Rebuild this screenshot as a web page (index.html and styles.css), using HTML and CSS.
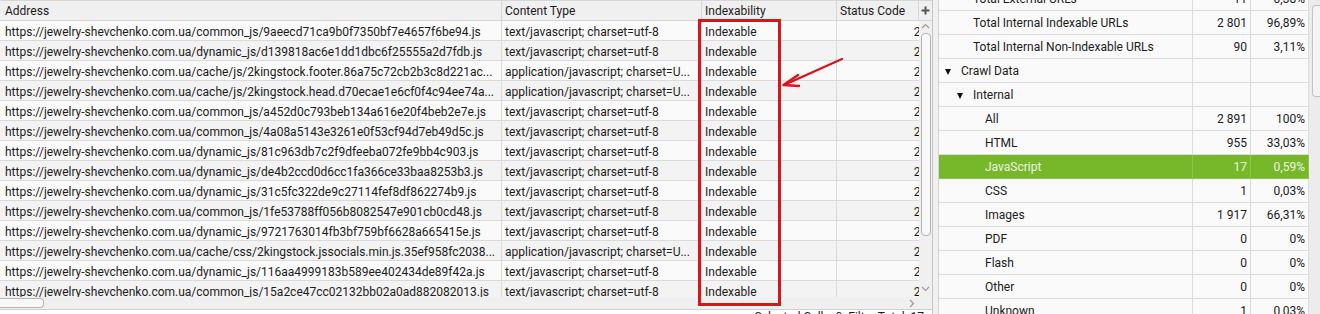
FILE: index.html
```html
<!DOCTYPE html>
<html lang="en">
<head>
  <meta charset="UTF-8">
  <title>Crawl - JavaScript</title>
  <link rel="stylesheet" href="styles.css">
</head>
<body>
  <div class="app">
    <!-- left: results table -->
    <div class="left">
      <div class="head">
        <div class="hc c-addr">Address</div>
        <div class="hc c-type">Content Type</div>
        <div class="hc c-idx">Indexability</div>
        <div class="hc c-status">Status Code</div>
        <div class="hc c-plus">
          <svg width="9" height="9" viewBox="0 0 9 9"><rect x="3.5" y="0.5" width="2" height="8" fill="#555"/><rect x="0.5" y="3.5" width="8" height="2" fill="#555"/></svg>
        </div>
      </div>
      <div class="body">
        <div class="rows">
          <div class="row"><div class="c c-addr">https://jewelry-shevchenko.com.ua/common_js/9aeecd71ca9b0f7350bf7e4657f6be94.js</div><div class="c c-type">text/javascript; charset=utf-8</div><div class="c c-idx">Indexable</div><div class="c c-code">200</div></div>
          <div class="row"><div class="c c-addr">https://jewelry-shevchenko.com.ua/dynamic_js/d139818ac6e1dd1dbc6f25555a2d7fdb.js</div><div class="c c-type">text/javascript; charset=utf-8</div><div class="c c-idx">Indexable</div><div class="c c-code">200</div></div>
          <div class="row"><div class="c c-addr">https://jewelry-shevchenko.com.ua/cache/js/2kingstock.footer.86a75c72cb2b3c8d221ac...</div><div class="c c-type">application/javascript; charset=U...</div><div class="c c-idx">Indexable</div><div class="c c-code">200</div></div>
          <div class="row"><div class="c c-addr">https://jewelry-shevchenko.com.ua/cache/js/2kingstock.head.d70ecae1e6cf0f4c94ee74a...</div><div class="c c-type">application/javascript; charset=U...</div><div class="c c-idx">Indexable</div><div class="c c-code">200</div></div>
          <div class="row"><div class="c c-addr">https://jewelry-shevchenko.com.ua/common_js/a452d0c793beb134a616e20f4beb2e7e.js</div><div class="c c-type">text/javascript; charset=utf-8</div><div class="c c-idx">Indexable</div><div class="c c-code">200</div></div>
          <div class="row"><div class="c c-addr">https://jewelry-shevchenko.com.ua/common_js/4a08a5143e3261e0f53cf94d7eb49d5c.js</div><div class="c c-type">text/javascript; charset=utf-8</div><div class="c c-idx">Indexable</div><div class="c c-code">200</div></div>
          <div class="row"><div class="c c-addr">https://jewelry-shevchenko.com.ua/dynamic_js/81c963db7c2f9dfeeba072fe9bb4c903.js</div><div class="c c-type">text/javascript; charset=utf-8</div><div class="c c-idx">Indexable</div><div class="c c-code">200</div></div>
          <div class="row"><div class="c c-addr">https://jewelry-shevchenko.com.ua/dynamic_js/de4b2ccd0d6cc1fa366ce33baa8253b3.js</div><div class="c c-type">text/javascript; charset=utf-8</div><div class="c c-idx">Indexable</div><div class="c c-code">200</div></div>
          <div class="row"><div class="c c-addr">https://jewelry-shevchenko.com.ua/dynamic_js/31c5fc322de9c27114fef8df862274b9.js</div><div class="c c-type">text/javascript; charset=utf-8</div><div class="c c-idx">Indexable</div><div class="c c-code">200</div></div>
          <div class="row"><div class="c c-addr">https://jewelry-shevchenko.com.ua/common_js/1fe53788ff056b8082547e901cb0cd48.js</div><div class="c c-type">text/javascript; charset=utf-8</div><div class="c c-idx">Indexable</div><div class="c c-code">200</div></div>
          <div class="row"><div class="c c-addr">https://jewelry-shevchenko.com.ua/dynamic_js/9721763014fb3bf759bf6628a665415e.js</div><div class="c c-type">text/javascript; charset=utf-8</div><div class="c c-idx">Indexable</div><div class="c c-code">200</div></div>
          <div class="row"><div class="c c-addr">https://jewelry-shevchenko.com.ua/cache/css/2kingstock.jssocials.min.js.35ef958fc2038...</div><div class="c c-type">application/javascript; charset=U...</div><div class="c c-idx">Indexable</div><div class="c c-code">200</div></div>
          <div class="row"><div class="c c-addr">https://jewelry-shevchenko.com.ua/dynamic_js/116aa4999183b589ee402434de89f42a.js</div><div class="c c-type">text/javascript; charset=utf-8</div><div class="c c-idx">Indexable</div><div class="c c-code">200</div></div>
          <div class="row"><div class="c c-addr">https://jewelry-shevchenko.com.ua/common_js/15a2ce47cc02132bb02a0ad882082013.js</div><div class="c c-type">text/javascript; charset=utf-8</div><div class="c c-idx">Indexable</div><div class="c c-code">200</div></div>
        </div>
        <div class="vscroll">
          <svg class="chev" width="9" height="6" viewBox="0 0 9 6"><polyline points="1,5 4.5,1.5 8,5" fill="none" stroke="#9a9a9a" stroke-width="1.2"/></svg>
          <div class="vthumb"></div>
          <div class="vspace"></div>
          <svg class="chev" width="9" height="6" viewBox="0 0 9 6"><polyline points="1,1 4.5,4.5 8,1" fill="none" stroke="#9a9a9a" stroke-width="1.2"/></svg>
        </div>
      </div>
      <div class="hscroll">
        <div class="hthumb"></div>
        <svg class="hchev" width="6" height="9" viewBox="0 0 6 9"><polyline points="1,1 4.5,4.5 1,8" fill="none" stroke="#9a9a9a" stroke-width="1.2"/></svg>
      </div>
      <div class="statusbar">Selected Cells: 0&nbsp;&nbsp;Filter Total: 17</div>
    </div>

    <div class="split"></div>

    <!-- right: overview tree -->
    <div class="right">
      <div class="tree">
        <div class="trow"><div class="t-name leaf1">Total External URLs</div><div class="t-num">11</div><div class="t-pct">0,38%</div></div>
        <div class="trow"><div class="t-name leaf1">Total Internal Indexable URLs</div><div class="t-num">2 801</div><div class="t-pct">96,89%</div></div>
        <div class="trow"><div class="t-name leaf1">Total Internal Non-Indexable URLs</div><div class="t-num">90</div><div class="t-pct">3,11%</div></div>
        <div class="trow"><div class="t-name lvl0"><span class="tri"></span>Crawl Data</div><div class="t-num"></div><div class="t-pct"></div></div>
        <div class="trow"><div class="t-name lvl1"><span class="tri"></span>Internal</div><div class="t-num"></div><div class="t-pct"></div></div>
        <div class="trow"><div class="t-name leaf2">All</div><div class="t-num">2 891</div><div class="t-pct">100%</div></div>
        <div class="trow"><div class="t-name leaf2">HTML</div><div class="t-num">955</div><div class="t-pct">33,03%</div></div>
        <div class="trow selected"><div class="t-name leaf2">JavaScript</div><div class="t-num">17</div><div class="t-pct">0,59%</div></div>
        <div class="trow"><div class="t-name leaf2">CSS</div><div class="t-num">1</div><div class="t-pct">0,03%</div></div>
        <div class="trow"><div class="t-name leaf2">Images</div><div class="t-num">1 917</div><div class="t-pct">66,31%</div></div>
        <div class="trow"><div class="t-name leaf2">PDF</div><div class="t-num">0</div><div class="t-pct">0%</div></div>
        <div class="trow"><div class="t-name leaf2">Flash</div><div class="t-num">0</div><div class="t-pct">0%</div></div>
        <div class="trow"><div class="t-name leaf2">Other</div><div class="t-num">0</div><div class="t-pct">0%</div></div>
        <div class="trow"><div class="t-name leaf2">Unknown</div><div class="t-num">1</div><div class="t-pct">0,03%</div></div>
      </div>
      <div class="rscroll">
        <div class="rthumb"></div>
      </div>
    </div>
  </div>

  <!-- annotation drawn over the screenshot -->
  <div class="mark-box"></div>
  <svg class="mark-arrow" width="80" height="40" viewBox="0 0 80 40">
    <line x1="67" y1="7" x2="9" y2="33" stroke="#d9141c" stroke-width="2.4" stroke-linecap="round"/>
    <polyline points="23,23 8.5,33 24,34" fill="none" stroke="#d9141c" stroke-width="2.4" stroke-linecap="round" stroke-linejoin="round"/>
  </svg>
</body>
</html>
```

FILE: styles.css
```css
body {
  margin: 0;
  font-family: Roboto, "Liberation Sans", Arial, sans-serif;
  font-size: 12px;
  color: #1b1b1b;
  background: #fff;
  overflow: hidden;
}
.app {
  display: flex;
  height: 314px;
  overflow: hidden;
}

/* left table */
.left {
  width: 932px;
  flex: none;
  display: flex;
  flex-direction: column;
  border-right: 1px solid #c6c6c6;
}
.head {
  display: flex;
  flex: none;
  height: 19px;
  border-top: 1px solid #d6d6d6;
  border-bottom: 1px solid #d6d6d6;
  background: #f0f0f0;
}
.hc {
  line-height: 21px;
  padding-left: 3px;
  border-right: 1px solid #d6d6d6;
  white-space: nowrap;
  box-sizing: border-box;
  flex: none;
}
.hc.c-addr { width: 502px; padding-left: 5px; }
.hc.c-type { width: 200px; }
.hc.c-idx { width: 135px; }
.hc.c-status { width: 82px; }
.hc.c-plus {
  width: 13px;
  padding: 0;
  border-right: none;
  display: flex;
  align-items: center;
  justify-content: center;
}
.body {
  display: flex;
  flex: none;
  height: 276px;
  overflow: hidden;
}
.rows {
  width: 919px;
  flex: none;
  overflow: hidden;
}
.row {
  display: grid;
  grid-template-columns: 502px 200px 135px 97px;
  height: 20px;
  background: #fafafa;
}
.row:nth-child(even) {
  background: #f3f3f3;
}
.c {
  box-sizing: border-box;
  height: 20px;
  padding-top: 2px;
  line-height: 19px;
  padding-left: 3px;
  white-space: nowrap;
  overflow: hidden;
  border-right: 1px solid #dadada;
  border-bottom: 1px solid #dadada;
}
.c.c-addr { padding-left: 5px; }
.c.c-code {
  text-align: right;
  padding-right: 0;
  border-right: none;
}
.vscroll {
  width: 13px;
  flex: none;
  background: #f0f0f0;
  display: flex;
  flex-direction: column;
  align-items: center;
  padding-top: 2px;
}
.chev { flex: none; }
.vthumb {
  width: 8px;
  height: 201px;
  margin-top: 4px;
  border: 1px solid #b4b4b4;
  border-radius: 4px;
  background: #f8f8f8;
}
.vspace { flex: 1; }
.vscroll .chev:last-child { margin-bottom: 5px; }
.hscroll {
  flex: none;
  height: 12px;
  background: #f0f0f0;
  border-bottom: 1px solid #cfcfcf;
  display: flex;
  align-items: center;
}
.hthumb {
  width: 43px;
  height: 8px;
  border: 1px solid #b4b4b4;
  border-left: none;
  border-radius: 0 4px 4px 0;
  background: #f8f8f8;
}
.hchev {
  margin-left: auto;
  margin-right: 17px;
}
.statusbar {
  flex: none;
  height: 14px;
  line-height: 14px;
  text-align: right;
  padding-right: 8px;
  white-space: nowrap;
  background: #fff;
}

.split {
  width: 5px;
  flex: none;
  background: #f0f0f0;
}

/* right tree */
.right {
  flex: 1;
  display: flex;
  border-left: 1px solid #d4d4d4;
  overflow: hidden;
}
.tree {
  width: 370px;
  flex: none;
  margin-top: -13px;
  background: #fafafa;
}
.trow {
  display: grid;
  grid-template-columns: 254px 58px 58px;
  height: 24px;
}
.trow > div {
  box-sizing: border-box;
  height: 24px;
  padding-top: 2px;
  line-height: 21px;
  white-space: nowrap;
  border-right: 1px solid #dcdcdc;
  border-bottom: 1px solid #dcdcdc;
}
.t-num, .t-pct {
  text-align: right;
  padding-right: 3px;
}
.t-name { display: flex; align-items: center; }
.lvl0 { padding-left: 6px; }
.lvl1 { padding-left: 18px; }
.leaf1 { padding-left: 34px; }
.leaf2 { padding-left: 46px; }
.tri {
  width: 0;
  height: 0;
  border-left: 3.5px solid transparent;
  border-right: 3.5px solid transparent;
  border-top: 6px solid #111;
  margin-right: 10px;
}
.trow.selected {
  background: #76b82a;
  color: #eef6e2;
}
.trow.selected > div {
  border-color: #8cc44c;
}
.rscroll {
  flex: 1;
  background: #ececec;
  padding-top: 5px;
  padding-left: 3px;
}
.rthumb {
  height: 90px;
  border: 1px solid #c2c2c2;
  border-right: none;
  border-radius: 4px 0 0 4px;
  background: #f4f4f4;
}

/* annotation */
.mark-box {
  position: absolute;
  left: 698px;
  top: 19px;
  width: 77px;
  height: 281px;
  border: 3px solid #d9141c;
}
.mark-arrow {
  position: absolute;
  left: 775px;
  top: 52px;
}
```
